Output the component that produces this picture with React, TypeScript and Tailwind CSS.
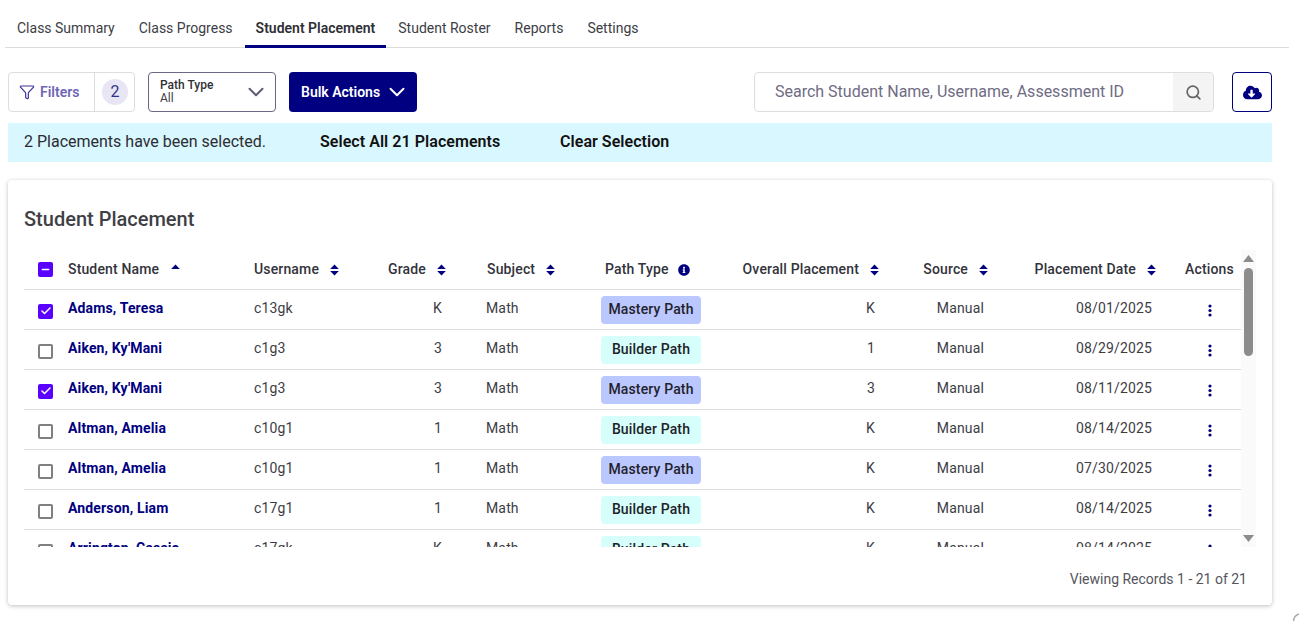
import { Check, ChevronDown, Funnel, Minus, Search } from "lucide-react";
import { FaCloudDownloadAlt, FaInfoCircle } from "react-icons/fa";

const tabs = ["Class Summary", "Class Progress", "Student Placement", "Student Roster", "Reports", "Settings"];

const rows = [
  { name: "Adams, Teresa", user: "c13gk", grade: "K", path: "Mastery Path", overall: "K", date: "08/01/2025", checked: true },
  { name: "Aiken, Ky'Mani", user: "c1g3", grade: "3", path: "Builder Path", overall: "1", date: "08/29/2025", checked: false },
  { name: "Aiken, Ky'Mani", user: "c1g3", grade: "3", path: "Mastery Path", overall: "3", date: "08/11/2025", checked: true },
  { name: "Altman, Amelia", user: "c10g1", grade: "1", path: "Builder Path", overall: "K", date: "08/14/2025", checked: false },
  { name: "Altman, Amelia", user: "c10g1", grade: "1", path: "Mastery Path", overall: "K", date: "07/30/2025", checked: false },
  { name: "Anderson, Liam", user: "c17g1", grade: "1", path: "Builder Path", overall: "K", date: "08/14/2025", checked: false },
  { name: "Arrington, Cassie", user: "c17gk", grade: "K", path: "Builder Path", overall: "K", date: "08/14/2025", checked: false },
];

const gridCols = "grid grid-cols-[44px_186px_118px_86px_132px_122px_180px_108px_168px_73px] items-center";

function SortIcon({ up }: { up?: boolean }) {
  return (
    <svg width="9" height="12" viewBox="0 0 9 12" fill="#000080" className="shrink-0">
      <path d="M4.5 0.5 L8.8 5 H0.2 Z" />
      {!up && <path d="M4.5 11.5 L8.8 7 H0.2 Z" />}
    </svg>
  );
}

function Box({ state }: { state: "on" | "off" | "some" }) {
  if (state === "off") {
    return <span className="block h-[15px] w-[15px] rounded-[2px] border-2 border-[#808080] bg-white" />;
  }
  return (
    <span className="flex h-[15px] w-[15px] items-center justify-center rounded-[2px] bg-[#5a00ff] text-white">
      {state === "on" ? <Check size={12} strokeWidth={3} /> : <Minus size={11} strokeWidth={3} />}
    </span>
  );
}

function Dots() {
  return (
    <svg width="4" height="13" viewBox="0 0 4 13" fill="#000080">
      <circle cx="2" cy="2" r="1.6" />
      <circle cx="2" cy="6.5" r="1.6" />
      <circle cx="2" cy="11" r="1.6" />
    </svg>
  );
}

export default function App() {
  return (
    <div className="relative h-[621px] w-[1299px] overflow-hidden bg-white text-[14px] text-[#3d3d45] [font-family:Roboto,sans-serif]">
      <div className="ml-[5px] mr-[10px] flex h-[48px] items-end border-b border-[#dcdcdc]">
        {tabs.map((t) => (
          <div
            key={t}
            className={
              t === "Student Placement"
                ? "-mb-px flex h-[40px] items-center border-b-[3px] border-[#000080] px-[11px] pt-[3px] font-semibold text-[#2f2f36]"
                : "flex h-[40px] items-center px-[12px] pt-[2px]"
            }
          >
            {t}
          </div>
        ))}
      </div>

      <div className="mt-[24px] flex h-[40px] items-stretch pl-[8px] pr-[27px]">
        <div className="flex w-[127px] items-center rounded-[4px] border border-[#dedede]">
          <div className="flex h-full w-[86px] items-center gap-[5px] border-r border-[#dedede] pl-[10px] font-semibold text-[#6f66b5]">
            <Funnel size={16} strokeWidth={1.8} className="text-[#3c3399]" />
            Filters
          </div>
          <span className="ml-[7px] flex h-[26px] w-[26px] items-center justify-center rounded-full bg-[#e8e6f4] text-[16px] text-[#33338a]">
            2
          </span>
        </div>
        <div className="ml-[13px] flex w-[128px] items-center justify-between rounded-[4px] border border-[#6b6885] pl-[11px] pr-[6px]">
          <div className="text-[12px] leading-[13px]">
            <div className="font-medium text-[#2f2f36]">Path Type</div>
            <div>All</div>
          </div>
          <ChevronDown size={26} strokeWidth={1.8} className="text-[#5f5c78]" />
        </div>
        <div className="ml-[13px] flex w-[128px] items-center gap-[4px] rounded-[4px] bg-[#000080] pl-[12px] font-semibold text-white">
          Bulk Actions
          <ChevronDown size={26} strokeWidth={1.8} />
        </div>
        <div className="ml-auto flex w-[460px] overflow-hidden rounded-[4px] border border-[#dedede]">
          <div className="flex flex-1 items-center pl-[20px] text-[16px] text-[#6f6c85]">
            Search Student Name, Username, Assessment ID
          </div>
          <div className="flex w-[40px] items-center justify-center bg-[#f4f4f4] text-[#666666]">
            <Search size={17} strokeWidth={2.4} />
          </div>
        </div>
        <div className="ml-[18px] flex w-[40px] items-center justify-center rounded-[4px] border border-[#000080] text-[#000080]">
          <FaCloudDownloadAlt size={19} />
        </div>
      </div>

      <div className="ml-[8px] mt-[11px] flex h-[39px] w-[1264px] items-center bg-[#d9f7fe] pb-[2px] pl-[16px] text-[16px]">
        <span className="w-[296px] text-[#2c2c33]">2 Placements have been selected.</span>
        <span className="w-[240px] font-semibold tracking-[0.05px] text-[#111111]">Select All 21 Placements</span>
        <span className="font-semibold tracking-[0.05px] text-[#111111]">Clear Selection</span>
      </div>

      <div className="ml-[8px] mt-[18px] h-[425px] w-[1264px] rounded-[4px] bg-white shadow-[0_1px_4px_rgba(0,0,0,0.25)]">
        <h2 className="h-[70px] pl-[16px] pt-[26px] text-[20px] leading-[26px] font-medium text-[#3f3f46]">
          Student Placement
        </h2>
        <div className="ml-[16px] flex h-[297px] w-[1232px]">
          <div className="w-[1217px] overflow-hidden">
            <div className={`${gridCols} h-[40px] border-b border-[#dcdcdc] font-medium tracking-[0.15px] text-[#33333b]`}>
              <div className="pl-[14px]">
                <Box state="some" />
              </div>
              <div className="flex items-center gap-[12px]">
                Student Name
                <span className="mt-[1px]">
                  <SortIcon up />
                </span>
              </div>
              <div className="flex items-center gap-[11px]">
                Username
                <SortIcon />
              </div>
              <div className="flex items-center justify-end gap-[11px] pr-[12px]">
                Grade
                <SortIcon />
              </div>
              <div className="flex items-center gap-[11px] pl-[29px]">
                Subject
                <SortIcon />
              </div>
              <div className="flex items-center gap-[9px] pl-[15px]">
                Path Type
                <FaInfoCircle size={12} className="text-[#000080]" />
              </div>
              <div className="flex items-center justify-end gap-[11px] pr-[13px]">
                Overall Placement
                <SortIcon />
              </div>
              <div className="flex items-center justify-end gap-[11px] pr-[12px]">
                Source
                <SortIcon />
              </div>
              <div className="flex items-center justify-end gap-[11px] pr-[12px]">
                Placement Date
                <SortIcon />
              </div>
              <div className="pl-[17px]">Actions</div>
            </div>
            {rows.map((r, i) => (
              <div key={i} className={`${gridCols} h-[40px] border-b border-[#dcdcdc] tracking-[0.15px]`}>
                <div className="pl-[14px] pt-[3px]">
                  <Box state={r.checked ? "on" : "off"} />
                </div>
                <div className="pb-[2px] font-bold text-[#000080]">{r.name}</div>
                <div className="pb-[2px]">{r.user}</div>
                <div className="pb-[2px] pr-[16px] text-right">{r.grade}</div>
                <div className="pb-[2px] pl-[28px]">Math</div>
                <div className="pl-[11px]">
                  <span
                    className={
                      r.path === "Mastery Path"
                        ? "flex h-[28px] w-[100px] items-center justify-center rounded-[4px] bg-[#bbc8ff] font-medium text-[#22222a]"
                        : "flex h-[28px] w-[100px] items-center justify-center rounded-[4px] bg-[#d6fffc] font-medium text-[#22222a]"
                    }
                  >
                    {r.path}
                  </span>
                </div>
                <div className="pb-[2px] pr-[17px] text-right">{r.overall}</div>
                <div className="pb-[2px] pr-[16px] text-right">Manual</div>
                <div className="pb-[2px] pr-[16px] text-right">{r.date}</div>
                <div className="flex justify-start pl-[40px] pt-[2px]">
                  <Dots />
                </div>
              </div>
            ))}
          </div>
          <div className="flex w-[15px] flex-col items-center bg-[#fafafa]">
            <svg width="11" height="7" viewBox="0 0 11 7" fill="#8c8c8c" className="mt-[5px]">
              <path d="M5.5 0 L11 7 H0 Z" />
            </svg>
            <div className="mt-[6px] h-[88px] w-[9px] rounded-[5px] bg-[#8c8c8c]" />
            <svg width="11" height="7" viewBox="0 0 11 7" fill="#8c8c8c" className="mb-[5px] mt-auto">
              <path d="M5.5 7 L11 0 H0 Z" />
            </svg>
          </div>
        </div>
        <div className="pr-[25px] pt-[22px] text-right text-[#55555c]">Viewing Records 1 - 21 of 21</div>
      </div>

      <svg width="6" height="8" viewBox="0 0 6 8" fill="none" className="absolute bottom-0 right-0">
        <path d="M0.5 8 Q1 2.5 6 1" stroke="#a8a8a8" strokeWidth="1.5" />
      </svg>
    </div>
  );
}
